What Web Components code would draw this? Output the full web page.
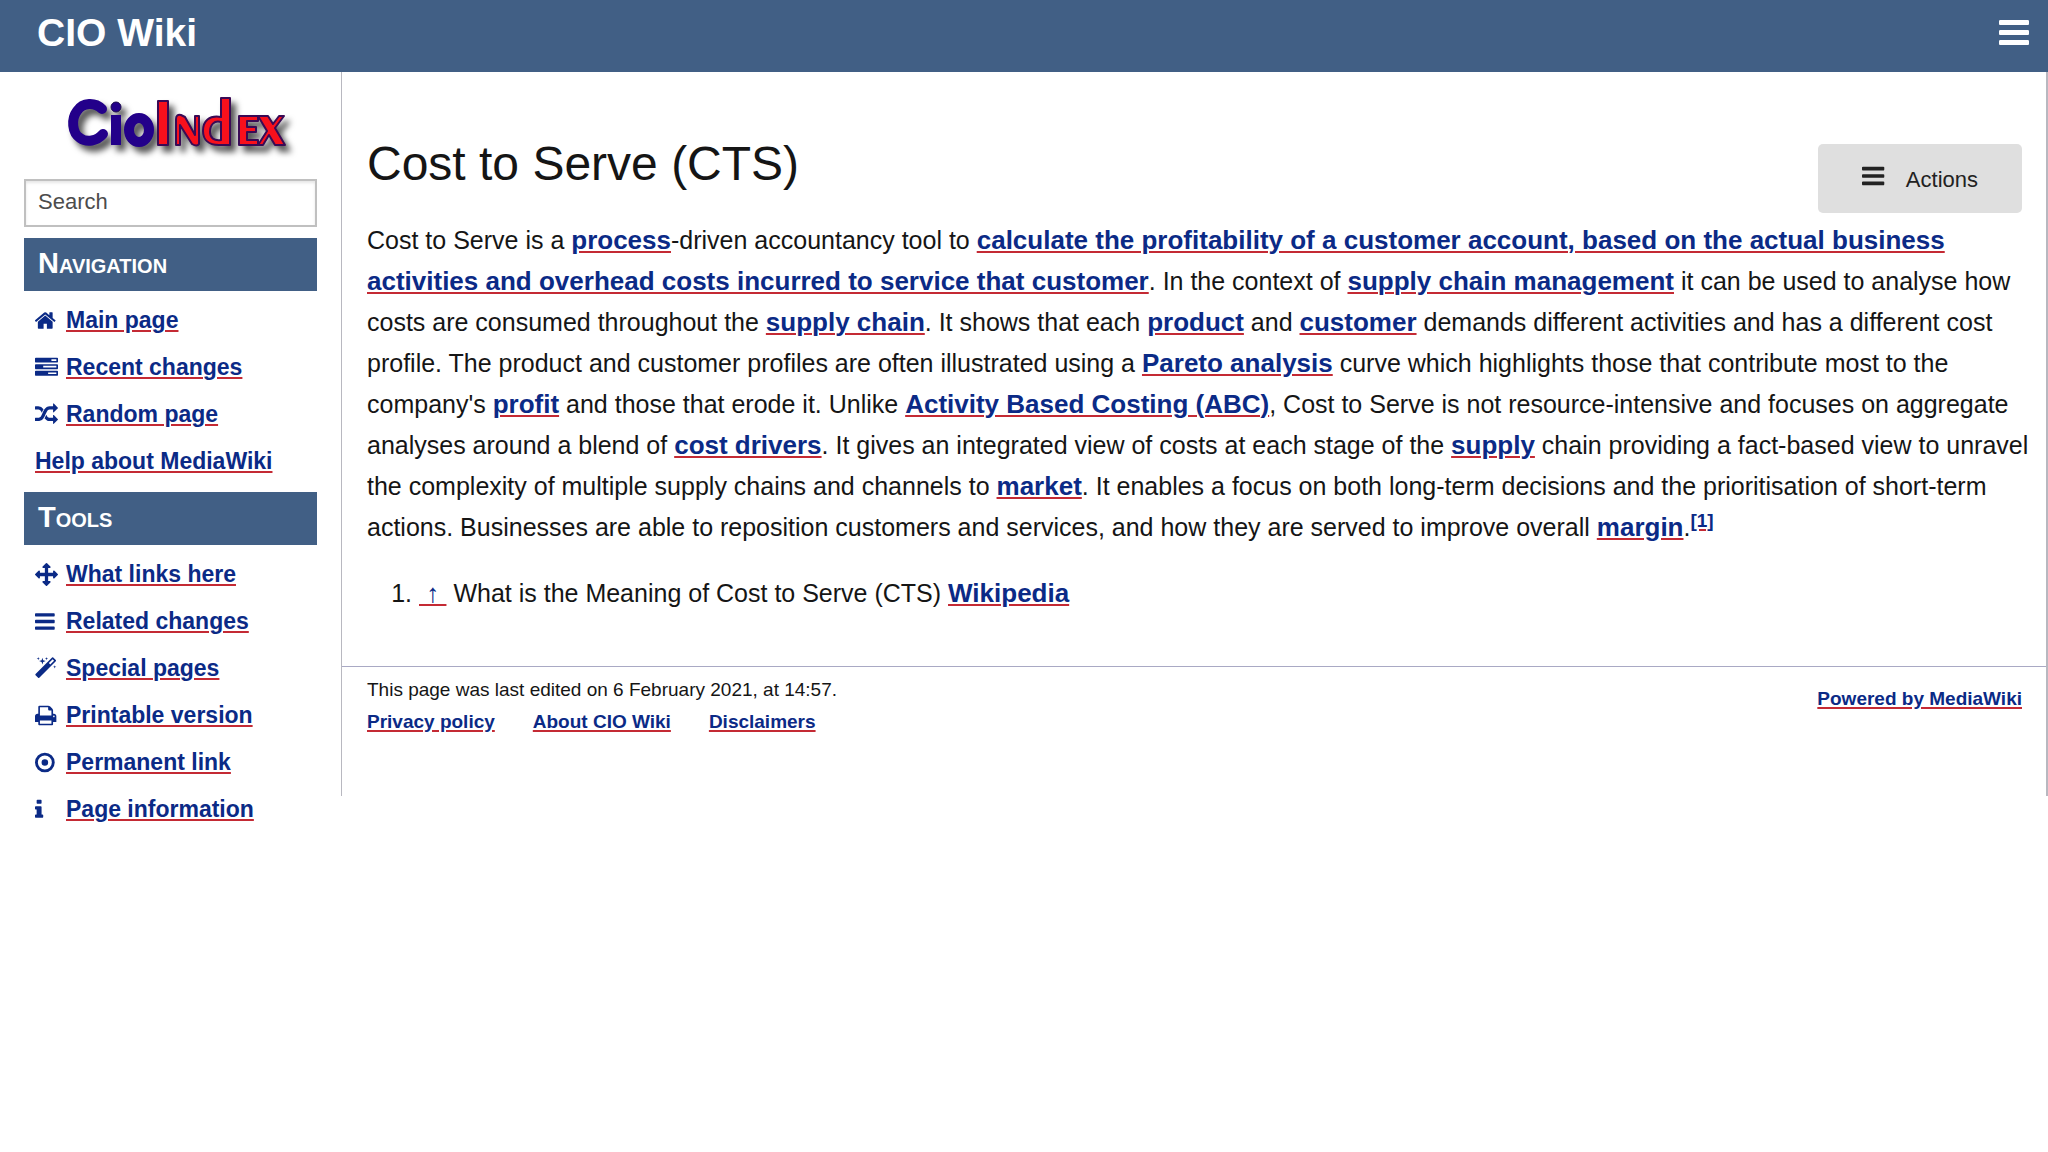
<!DOCTYPE html>
<html lang="en">
<head>
<meta charset="utf-8">
<title>Cost to Serve (CTS) - CIO Wiki</title>
<style>
    body {
        margin: 0;
        background: #fff;
        color: #151515;
        font-family: "Liberation Sans", Arial, sans-serif;
        font-size: 25px;
        line-height: 41px;
    }
</style>
</head>
<body>
<wiki-page></wiki-page>

<script>
const ICONS = {
    home: [98, 'M1472 992v480q0 26-19 45t-45 19h-384v-384h-256v384h-384q-26 0-45-19t-19-45v-480q0-1 .5-3t.5-3l575-474 575 474q1 2 1 6zm223-69l-62 74q-8 9-21 11h-3q-13 0-21-7l-692-577-692 577q-12 8-24 7-13-2-21-11l-62-74q-8-10-7-23.5t11-21.5l719-599q32-26 76-26t76 26l244 204v-195q0-14 9-23t23-9h192q14 0 23 9t9 23v408l219 182q10 8 11 21.5t-7 23.5z'],
    tasks: [0, 'M1024 1408h640v-128h-640v128zm-384-512h1024v-128h-1024v128zm640-512h384v-128h-384v128zm512 832v256q0 26-19 45t-45 19h-1664q-26 0-45-19t-19-45v-256q0-26 19-45t45-19h1664q26 0 45 19t19 45zm0-512v256q0 26-19 45t-45 19h-1664q-26 0-45-19t-19-45v-256q0-26 19-45t45-19h1664q26 0 45 19t19 45zm0-512v256q0 26-19 45t-45 19h-1664q-26 0-45-19t-19-45v-256q0-26 19-45t45-19h1664q26 0 45 19t19 45z'],
    random: [0, 'M666 481q-60 92-137 273-22-45-37-72.5t-40.5-63.5-51-56.5-63-35-81.5-14.5h-224q-14 0-23-9t-9-23v-192q0-14 9-23t23-9h224q250 0 410 225zm1126 799q0 14-9 23l-320 320q-9 9-23 9-13 0-22.5-9.5t-9.5-22.5v-192q-32 0-85 .5t-81 1-73-1-71-5-64-10.5-63-18.5-58-28.5-59-40-55-53.5-56-69.5q59-93 136-273 22 45 37 72.5t40.5 63.5 51 56.5 63 35 81.5 14.5h256v-192q0-14 9-23t23-9q12 0 24 10l319 319q9 9 9 23zm0-896q0 14-9 23l-320 320q-9 9-23 9-13 0-22.5-9.5t-9.5-22.5v-192h-256q-48 0-87 15t-69 45-51 61.5-45 77.5q-32 62-78 171-29 66-49.5 111t-54 105-64 100-74 83-90 68.5-106.5 42-128 16.5h-224q-14 0-23-9t-9-23v-192q0-14 9-23t23-9h224q48 0 87-15t69-45 51-61.5 45-77.5q32-62 78-171 29-66 49.5-111t54-105 64-100 74-83 90-68.5 106.5-42 128-16.5h256v-192q0-14 9-23t23-9q12 0 24 10l319 319q9 9 9 23z'],
    arrows: [0, 'M1792 896q0 26-19 45l-256 256q-19 19-45 19t-45-19-19-45v-128h-384v384h128q26 0 45 19t19 45-19 45l-256 256q-19 19-45 19t-45-19l-256-256q-19-19-19-45t19-45 45-19h128v-384h-384v128q0 26-19 45t-45 19-45-19l-256-256q-19-19-19-45t19-45l256-256q19-19 45-19t45 19 19 45v128h384v-384h-128q-26 0-45-19t-19-45 19-45l256-256q19-19 45-19t45 19l256 256q19 19 19 45t-19 45-45 19h-128v384h384v-128q0-26 19-45t45-19 45 19l256 256q19 19 19 45z'],
    bars: [128, 'M1664 1344v128q0 26-19 45t-45 19h-1408q-26 0-45-19t-19-45v-128q0-26 19-45t45-19h1408q26 0 45 19t19 45zm0-512v128q0 26-19 45t-45 19h-1408q-26 0-45-19t-19-45v-128q0-26 19-45t45-19h1408q26 0 45 19t19 45zm0-512v128q0 26-19 45t-45 19h-1408q-26 0-45-19t-19-45v-128q0-26 19-45t45-19h1408q26 0 45 19t19 45z'],
    magic: [64, 'M1254 581l293-293-107-107-293 293zm447-293q0 27-18 45l-1286 1286q-18 18-45 18t-45-18l-198-198q-18-18-18-45t18-45l1286-1286q18-18 45-18t45 18l198 198q18 18 18 45zm-1351-190l98 30-98 30-30 98-30-98-98-30 98-30 30-98zm350 162l196 60-196 60-60 196-60-196-196-60 196-60 60-196zm930 478l98 30-98 30-30 98-30-98-98-30 98-30 30-98zm-640-640l98 30-98 30-30 98-30-98-98-30 98-30 30-98z'],
    print: [64, 'M448 1536h896v-256h-896v256zm0-640h896v-384h-160q-40 0-68-28t-28-68v-160h-640v640zm1152 64q0-26-19-45t-45-19-45 19-19 45 19 45 45 19 45-19 19-45zm128 0v416q0 13-9.5 22.5t-22.5 9.5h-224v160q0 40-28 68t-68 28h-960q-40 0-68-28t-28-68v-160h-224q-13 0-22.5-9.5t-9.5-22.5v-416q0-79 56.5-135.5t135.5-56.5h64v-544q0-40 28-68t68-28h672q40 0 88 20t76 48l152 152q28 28 48 76t20 88v256h64q79 0 135.5 56.5t56.5 135.5z'],
    target: [128, 'M1152 896a256 256 0 1 1-512 0a256 256 0 1 1 512 0zM896 352a544 544 0 1 0 0 1088a544 544 0 1 0 0-1088zM896 128a768 768 0 1 1 0 1536a768 768 0 1 1 0-1536z'],
    info: [576, 'M1216 1344v128q0 26-19 45t-45 19h-512q-26 0-45-19t-19-45v-128q0-26 19-45t45-19h64v-384h-64q-26 0-45-19t-19-45v-128q0-26 19-45t45-19h384q26 0 45 19t19 45v576h64q26 0 45 19t19 45zm-128-1152v192q0 26-19 45t-45 19h-256q-26 0-45-19t-19-45v-192q0-26 19-45t45-19h256q26 0 45 19t19 45z']
};

const LINK_STYLE = `
    a {
        color: #0b2a86;
        font-weight: bold;
        text-decoration: underline #c42a34 2px;
        text-underline-offset: 2px;
    }
`;

class WikiIcon extends HTMLElement {
    connectedCallback() {
        const [left, path] = ICONS[this.getAttribute('name')];
        this.attachShadow({ mode: 'open' });
        this.shadowRoot.innerHTML = `
            <style>
                :host { display: block; flex: none; width: 23px; height: 23px; }
                svg { display: block; width: 100%; height: 100%; fill: currentColor; }
            </style>
            <svg viewBox="${left} 0 1792 1792" aria-hidden="true"><path d="${path}"/></svg>
        `;
    }
}

class WikiHeader extends HTMLElement {
    connectedCallback() {
        this.attachShadow({ mode: 'open' });
        this.shadowRoot.innerHTML = `
            <style>
                :host {
                    display: flex;
                    justify-content: space-between;
                    align-items: flex-start;
                    height: 72px;
                    padding: 0 18px 0 37px;
                    box-sizing: border-box;
                    background: #415f85;
                }
                a {
                    color: #fff;
                    font-size: 39px;
                    font-weight: bold;
                    line-height: 66px;
                    text-decoration: none;
                }
                button {
                    padding: 15px 0 0;
                    border: 0;
                    background: none;
                    color: #fff;
                }
                wiki-icon { width: 35px; height: 35px; margin-right: -4px; }
            </style>
            <a href="#">CIO Wiki</a>
            <button type="button" aria-label="Menu"><wiki-icon name="bars"></wiki-icon></button>
        `;
    }
}

class WikiLogo extends HTMLElement {
    connectedCallback() {
        this.attachShadow({ mode: 'open' });
        this.shadowRoot.innerHTML = `
            <style>
                :host { display: block; }
                a { display: block; width: 226px; margin: 0 27px 0 auto; }
                svg { display: block; width: 100%; filter: drop-shadow(5px 6px 3px #000a); }
                .line { fill: none; stroke: #23008a; }
                .round { stroke-linecap: round; }
                .dot { fill: #23008a; stroke: #1a0a4a; }
                .red { fill: #f8101c; stroke: #3a0a55; stroke-width: 2; stroke-linejoin: round; }
            </style>
            <a href="#" aria-label="CioIndex">
                <svg viewBox="0 0 226 70">
                    <path class="line round" stroke-width="10" d="M38 22C31 15 19 15 13 24C7 32 8 46 16 51C23 56 33 54 39 47"/>
                    <path class="line" stroke-width="10" d="M52 28V58"/>
                    <circle class="dot" cx="52" cy="20" r="5"/>
                    <ellipse class="line" cx="75" cy="43" rx="10" ry="12" stroke-width="10"/>
                    <path class="red" d="M94 14H104V58H94Z"/>
                    <path class="red" d="M112 58V32Q112 27 117 28L121 30L131 48V29H135V57Q133 60 128 57L116 38V58Z"/>
                    <path class="red" fill-rule="evenodd" d="M157 11H166V58H155C144 58 139 52 139 44C139 34 145 28 157 30ZM157 35C150 33 146 38 146 45C146 51 150 54 157 53Z"/>
                    <path class="red" d="M175 29H194V34H183V40H192V45H183V53H194V58H175Z"/>
                    <path class="red" d="M194 29H204L209 37L215 29H220L211 41L221 58H211L205 48L199 58H194L203 44Z"/>
                </svg>
            </a>
        `;
    }
}

class WikiSearch extends HTMLElement {
    connectedCallback() {
        this.attachShadow({ mode: 'open' });
        this.shadowRoot.innerHTML = `
            <style>
                :host { display: block; }
                input {
                    display: block;
                    width: 100%;
                    height: 48px;
                    box-sizing: border-box;
                    padding: 0 12px 3px;
                    border: 2px solid #c0c0c0;
                    border-radius: 0;
                    background: #fff;
                    box-shadow: inset 0 2px 3px #0000001a;
                    font: 22px "Liberation Sans", Arial, sans-serif;
                    color: #222;
                }
                input::placeholder { color: #4c4c4c; opacity: 1; }
            </style>
            <input type="search" placeholder="Search" aria-label="Search">
        `;
    }
}

class WikiMenu extends HTMLElement {
    connectedCallback() {
        this.attachShadow({ mode: 'open' });
        this.shadowRoot.innerHTML = `
            <style>
                :host { display: block; }
                h2 {
                    margin: 0;
                    padding: 0 14px 3px;
                    background: #415f85;
                    color: #fff;
                    font-size: 29px;
                    font-variant: small-caps;
                    line-height: 50px;
                }
                ul {
                    margin: 0;
                    padding: 6px 0 7px 11px;
                    list-style: none;
                }
            </style>
            <h2>${this.getAttribute('heading')}</h2>
            <ul><slot></slot></ul>
        `;
    }
}

class WikiMenuLink extends HTMLElement {
    connectedCallback() {
        const icon = this.getAttribute('icon');
        this.attachShadow({ mode: 'open' });
        this.shadowRoot.innerHTML = `
            <style>
                ${LINK_STYLE}
                :host { display: block; }
                li {
                    display: flex;
                    align-items: center;
                    gap: 8px;
                    font-size: 23px;
                    line-height: 47px;
                    white-space: nowrap;
                }
                wiki-icon { color: #0b2a86; }
            </style>
            <li>${icon ? `<wiki-icon name="${icon}"></wiki-icon>` : ''}<a href="#"><slot></slot></a></li>
        `;
    }
}

class WikiActions extends HTMLElement {
    connectedCallback() {
        this.attachShadow({ mode: 'open' });
        this.shadowRoot.innerHTML = `
            <style>
                :host { display: block; }
                button {
                    display: flex;
                    gap: 18px;
                    height: 69px;
                    padding: 19px 44px 0;
                    border: 0;
                    border-radius: 5px;
                    background: #dfdfdf;
                    color: #222;
                    font: 22px/34px "Liberation Sans", Arial, sans-serif;
                }
                wiki-icon { width: 26px; height: 26px; }
            </style>
            <button type="button"><wiki-icon name="bars"></wiki-icon>Actions</button>
        `;
    }
}

class WikiArticle extends HTMLElement {
    connectedCallback() {
        this.attachShadow({ mode: 'open' });
        this.shadowRoot.innerHTML = `
            <style>
                ${LINK_STYLE}
                :host { display: block; padding: 72px 24px 52px 25px; }
                a { font-size: 26px; line-height: 1; }
                header {
                    display: flex;
                    justify-content: space-between;
                    align-items: flex-start;
                }
                h1 {
                    margin: 0;
                    font-size: 48px;
                    font-weight: normal;
                    line-height: 40px;
                }
                p { margin: 7px -16px 25px 0; }
                ol { margin: 0; padding-left: 52px; }
                sup { line-height: 0; }
                sup a { font-size: 19px; }
            </style>
            <header>
                <h1>Cost to Serve (CTS)</h1>
                <wiki-actions></wiki-actions>
            </header>
            <p>Cost to Serve is a <a href="#">process</a>-driven accountancy tool to <a href="#">calculate the profitability of a customer account, based on the actual business activities and overhead costs incurred to service that customer</a>. In the context of <a href="#">supply chain management</a> it can be used to analyse how costs are consumed throughout the <a href="#">supply chain</a>. It shows that each <a href="#">product</a> and <a href="#">customer</a> demands different activities and has a different cost profile. The product and customer profiles are often illustrated using a <a href="#">Pareto analysis</a> curve which highlights those that contribute most to the company's <a href="#">profit</a> and those that erode it. Unlike <a href="#">Activity Based Costing (ABC)</a>, Cost to Serve is not resource-intensive and focuses on aggregate analyses around a blend of <a href="#">cost drivers</a>. It gives an integrated view of costs at each stage of the <a href="#">supply</a> chain providing a fact-based view to unravel the complexity of multiple supply chains and channels to <a href="#">market</a>. It enables a focus on both long-term decisions and the prioritisation of short-term actions. Businesses are able to reposition customers and services, and how they are served to improve overall <a href="#">margin</a>.<sup><a href="#">[1]</a></sup></p>
            <ol>
                <li><a href="#">&nbsp;↑&nbsp;</a> What is the Meaning of Cost to Serve (CTS) <a href="#">Wikipedia</a></li>
            </ol>
        `;
    }
}

class WikiFooter extends HTMLElement {
    connectedCallback() {
        this.attachShadow({ mode: 'open' });
        this.shadowRoot.innerHTML = `
            <style>
                ${LINK_STYLE}
                :host {
                    display: flex;
                    justify-content: space-between;
                    align-items: flex-start;
                    padding: 7px 24px 58px 25px;
                    border-top: 1px solid #a9a9c4;
                    font-size: 19px;
                    line-height: 32px;
                }
                p { margin: 0; }
                nav { display: flex; gap: 38px; }
                .powered { margin-top: 9px; }
            </style>
            <div>
                <p>This page was last edited on 6 February 2021, at 14:57.</p>
                <nav>
                    <a href="#">Privacy policy</a>
                    <a href="#">About CIO Wiki</a>
                    <a href="#">Disclaimers</a>
                </nav>
            </div>
            <a class="powered" href="#">Powered by MediaWiki</a>
        `;
    }
}

class WikiPage extends HTMLElement {
    connectedCallback() {
        this.attachShadow({ mode: 'open' });
        this.shadowRoot.innerHTML = `
            <style>
                :host { display: block; }
                .columns { display: flex; align-items: flex-start; }
                aside {
                    flex: none;
                    width: 341px;
                    box-sizing: border-box;
                    padding: 15px 24px 0;
                }
                main {
                    flex: 1;
                    min-width: 0;
                    border: solid #b8b8c0;
                    border-width: 0 2px 0 1px;
                }
                wiki-search { margin: 22px 0 11px; }
            </style>
            <wiki-header></wiki-header>
            <div class="columns">
                <aside>
                    <wiki-logo></wiki-logo>
                    <wiki-search></wiki-search>
                    <wiki-menu heading="Navigation">
                        <wiki-menu-link icon="home">Main page</wiki-menu-link>
                        <wiki-menu-link icon="tasks">Recent changes</wiki-menu-link>
                        <wiki-menu-link icon="random">Random page</wiki-menu-link>
                        <wiki-menu-link>Help about MediaWiki</wiki-menu-link>
                    </wiki-menu>
                    <wiki-menu heading="Tools">
                        <wiki-menu-link icon="arrows">What links here</wiki-menu-link>
                        <wiki-menu-link icon="bars">Related changes</wiki-menu-link>
                        <wiki-menu-link icon="magic">Special pages</wiki-menu-link>
                        <wiki-menu-link icon="print">Printable version</wiki-menu-link>
                        <wiki-menu-link icon="target">Permanent link</wiki-menu-link>
                        <wiki-menu-link icon="info">Page information</wiki-menu-link>
                    </wiki-menu>
                </aside>
                <main>
                    <wiki-article></wiki-article>
                    <wiki-footer></wiki-footer>
                </main>
            </div>
        `;
    }
}

customElements.define('wiki-icon', WikiIcon);
customElements.define('wiki-header', WikiHeader);
customElements.define('wiki-logo', WikiLogo);
customElements.define('wiki-search', WikiSearch);
customElements.define('wiki-menu', WikiMenu);
customElements.define('wiki-menu-link', WikiMenuLink);
customElements.define('wiki-actions', WikiActions);
customElements.define('wiki-article', WikiArticle);
customElements.define('wiki-footer', WikiFooter);
customElements.define('wiki-page', WikiPage);
</script>
</body>
</html>
